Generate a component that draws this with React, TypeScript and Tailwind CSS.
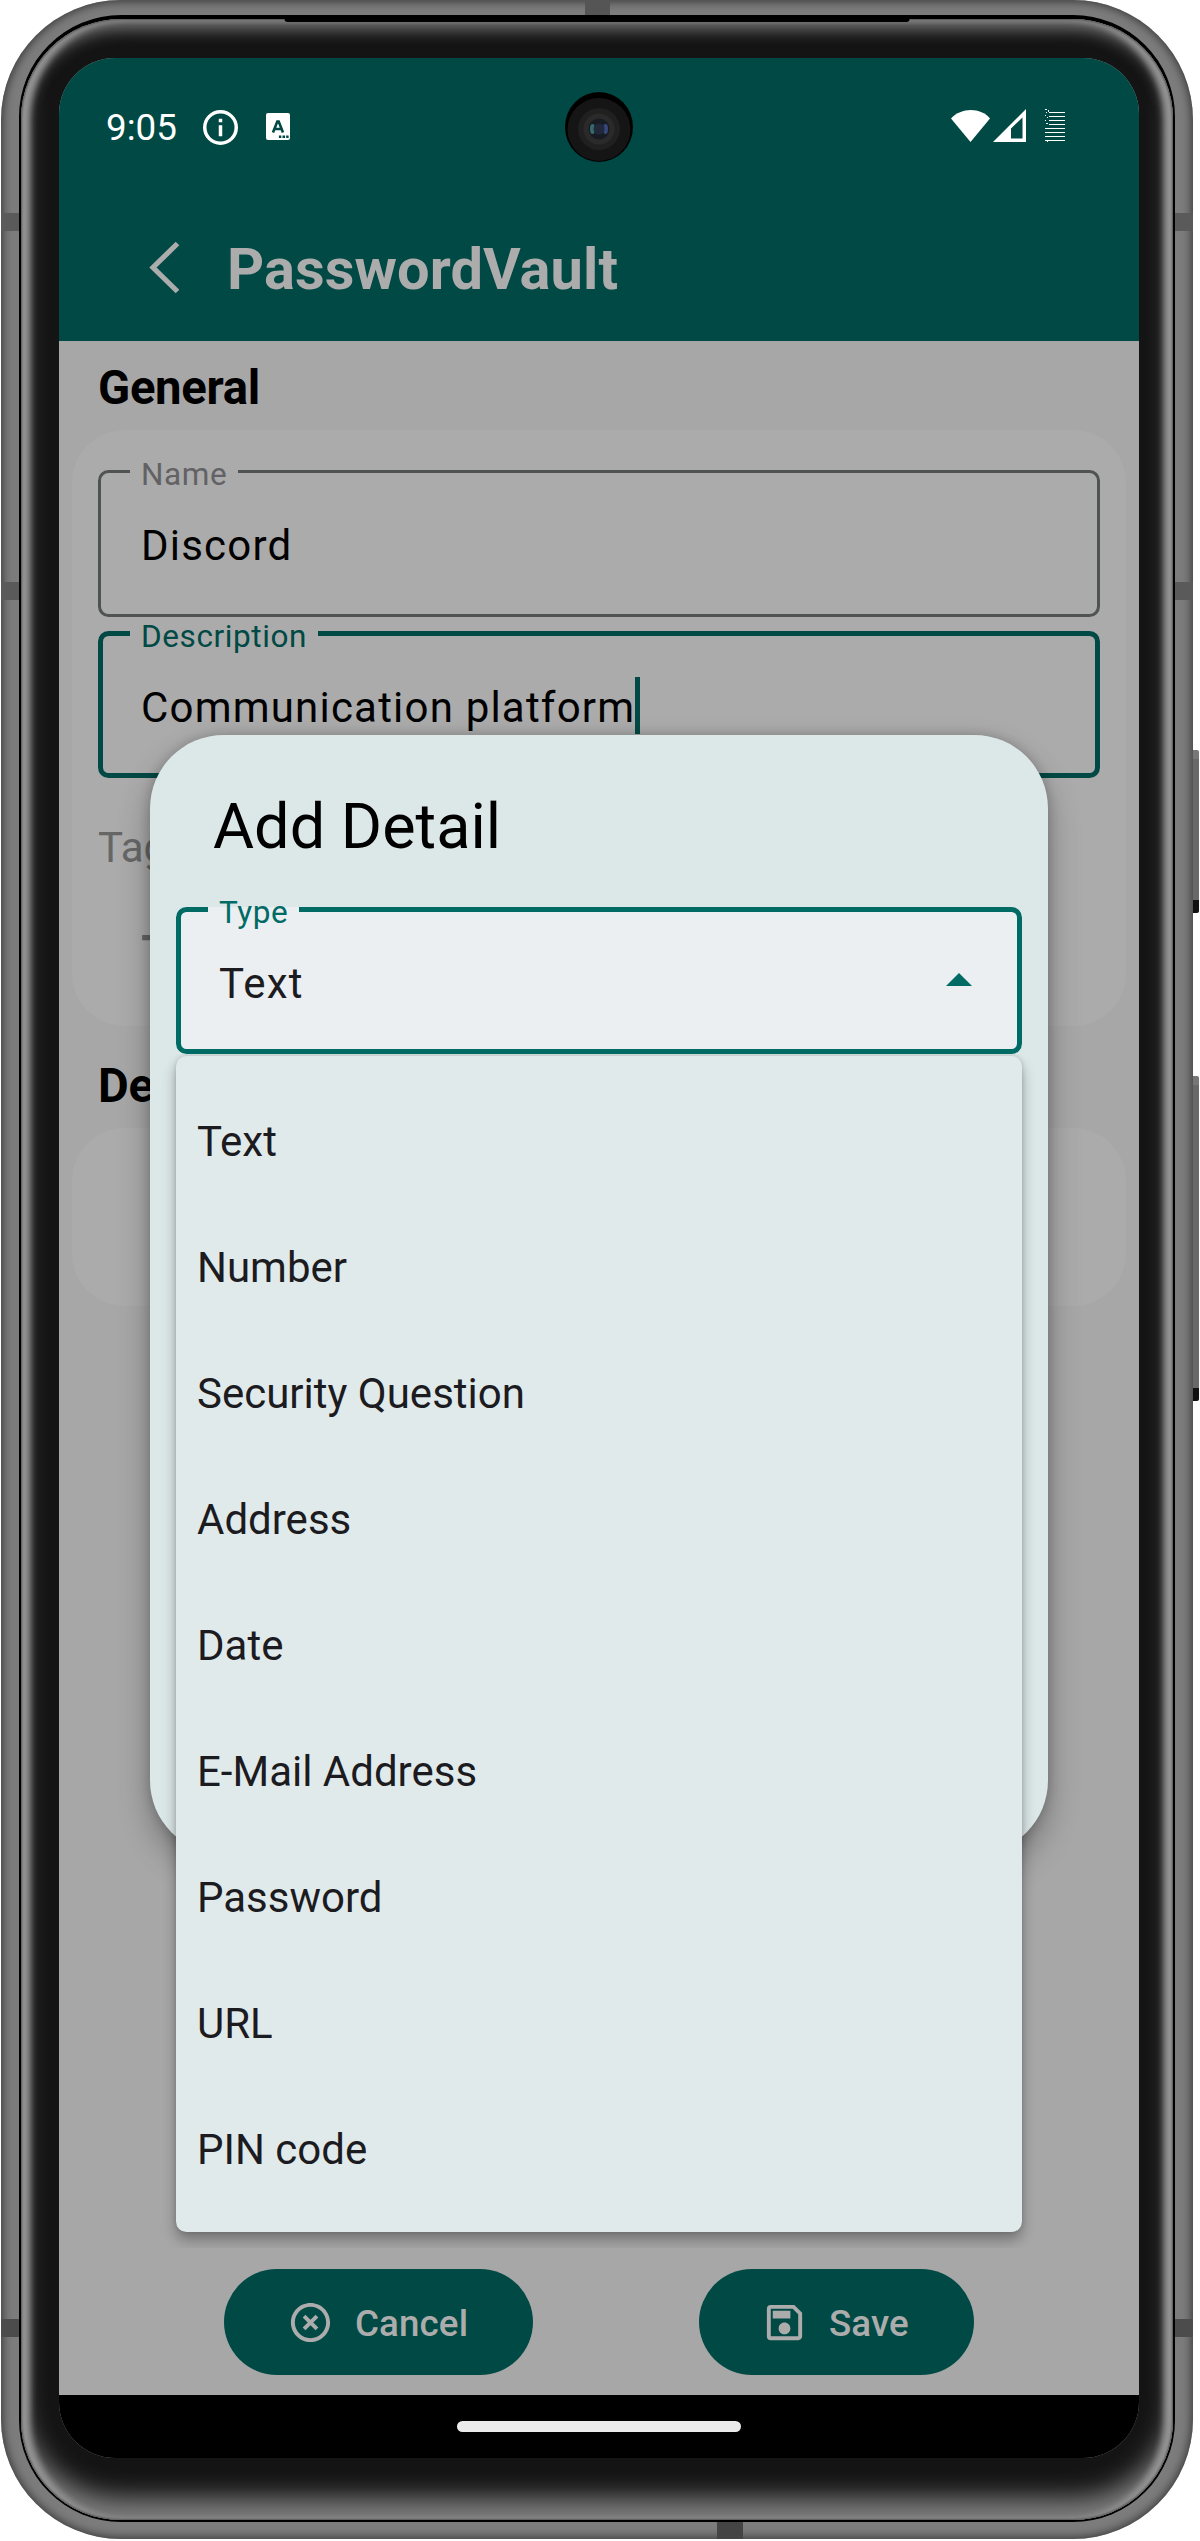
import React from "react";
import { MdHighlightOff, MdOutlineSave } from "react-icons/md";

const options = [
  "Text",
  "Number",
  "Security Question",
  "Address",
  "Date",
  "E-Mail Address",
  "Password",
  "URL",
  "PIN code",
];

function Camera() {
  return (
    <svg viewBox="0 0 68 70" className="absolute left-1/2 top-[34px] h-[70px] w-[68px] -translate-x-1/2">
      <ellipse cx="34" cy="35" rx="34" ry="35" fill="#000" />
      <ellipse cx="34" cy="37.500" rx="31.500" ry="31.500" fill="#151515" />
      <circle cx="34" cy="37" r="21" fill="#202020" />
      <circle cx="34" cy="37" r="15.500" fill="#2a2a2a" />
      <circle cx="34" cy="37" r="10.500" fill="#181c22" />
      <ellipse cx="27.500" cy="37" rx="2.500" ry="5" fill="#376a6a" />
      <ellipse cx="40.500" cy="37" rx="2.500" ry="5" fill="#35467c" />
      <circle cx="34" cy="37" r="5.500" fill="#20283a" />
    </svg>
  );
}

function StatusBar() {
  return (
    <div className="relative flex h-[136px] items-center pl-[47px] pr-[74px] text-white">
      <span className="mr-[26px] pt-[4px] text-[36.75px] leading-[44px]">9:05</span>
      <svg className="mt-[3px] h-[35px] w-[35px]" viewBox="0 0 20 20" fill="none">
        <circle cx="10" cy="10" r="9" stroke="white" strokeWidth="2" />
        <path d="M9 8.700h2V15H9zM9 5h2v2H9z" fill="white" />
      </svg>
      <svg className="ml-[28px] h-[27px] w-[24px]" viewBox="0 0 24 27">
        <rect width="24" height="27" rx="2" fill="white" />
        <path
          d="M7 19.500L11.300 8.500h1.400L17 19.500M8.600 16h6.800"
          fill="none"
          stroke="#004944"
          strokeWidth="2.600"
        />
        <path fill="#004944" d="M12 22.500h10.600v2.500H12z" />
        <path fill="white" d="M11.500 22h1.400v3.500h-1.400zM15.300 22h1.200v3.500h-1.200zM19 22h1.200v3.500H19z" />
      </svg>
      <Camera />
      <svg className="ml-auto h-[34px] w-[114px]" viewBox="0 0 114 34">
        <path d="M0 9.500C10-2 30-2 39 9.500L19.500 33z" fill="white" />
        <path fillRule="evenodd" d="M75 0v33H42zM71.500 8.500L60 19.500v10h11.500z" fill="white" />
        {[3, 7, 11, 15].map((y) => (
          <rect key={y} x="98" y={y} width="16" height="1" fill="white" />
        ))}
        {[19, 23, 27, 31].map((y) => (
          <rect key={y} x="94" y={y} width="20" height="1" fill="white" />
        ))}
        <path
          d="M94 0h2v1h-2zM95 3h1v1h-1zM97 1h1v2h-1zM94 6h1v1h-1zM96 8h1v1h-1zM94 11h1v1h-1zM95 14h2v1h-2zM96 32h1v1h-1z"
          fill="white"
        />
      </svg>
    </div>
  );
}

function AppBar() {
  return (
    <div className="flex h-[147px] items-center gap-[47px] pl-[90px]">
      <svg className="h-[53px] w-[31px]" viewBox="0 0 31 53" fill="none">
        <path d="M28.500 2.500L4 26.500l24.500 24" stroke="#acacac" strokeWidth="5.200" />
      </svg>
      <h1 className="pt-[3px] text-[57.75px] font-bold leading-[68px] tracking-[0.1px] text-[#acacac]">
        PasswordVault
      </h1>
    </div>
  );
}

type FieldProps = {
  label: string;
  value: string;
  className: string;
  labelClass: string;
  trailing?: React.ReactNode;
};

function OutlinedField({ label, value, className, labelClass, trailing }: FieldProps) {
  return (
    <fieldset className={"rounded-[10.5px] " + className}>
      <legend className={"px-[11px] text-[31.5px] leading-[25px] tracking-[0.6px] " + labelClass}>
        <span className="inline-block translate-y-[3px]">{label}</span>
      </legend>
      <div className="flex h-[128px] items-center pb-[6px] pl-[11px]">
        {value}
        {trailing}
      </div>
    </fieldset>
  );
}

export default function App() {
  return (
    <div className="relative h-[2541px] w-[1200px] overflow-hidden bg-white pl-[1px] font-[Roboto,sans-serif]">
      <div className="absolute left-[1190px] top-[750px] h-[163px] w-[9px] rounded-[2px] border-b-[13px] border-t-[9px] border-b-[#111] border-t-[#777] bg-[#686868]" />
      <div className="absolute left-[1190px] top-[1076px] h-[325px] w-[9px] rounded-[2px] border-b-[13px] border-t-[9px] border-b-[#111] border-t-[#777] bg-[#686868]" />
      <div className="relative h-[2539px] w-[1192px] rounded-[120px] bg-[#7c7c7c] px-[18px] pt-[15px] shadow-[inset_0_0_8px_2px_#3c3c3c]">
        <div className="absolute left-[584px] top-0 h-[18px] w-[25px] bg-[#555]" />
        <div className="absolute bottom-0 left-[716px] h-[18px] w-[26px] bg-[#444]" />
        <div className="absolute left-0 top-[213px] h-[18px] w-[19px] bg-[#5a5a5a]" />
        <div className="absolute left-0 top-[582px] h-[18px] w-[19px] bg-[#5a5a5a]" />
        <div className="absolute left-0 top-[2319px] h-[18px] w-[19px] bg-[#4c4c4c]" />
        <div className="absolute right-0 top-[213px] h-[18px] w-[19px] bg-[#5a5a5a]" />
        <div className="absolute right-0 top-[582px] h-[18px] w-[19px] bg-[#5a5a5a]" />
        <div className="absolute right-0 top-[2319px] h-[18px] w-[19px] bg-[#4c4c4c]" />
        <div className="relative h-[2507px] rounded-[102px] bg-black px-[2px] pb-[2px] pt-[4px]">
          <div className="relative h-[2501px] rounded-[100px] bg-[#141414] px-[38px] pt-[39px] shadow-[inset_0_0_2px_1px_#555,inset_9px_0_6px_0_#949494,inset_-9px_0_6px_0_#949494,inset_0_10px_16px_0_#777,inset_0_-22px_26px_0_#808080]">
            <div className="absolute left-1/2 top-0 h-[3px] w-[625px] -translate-x-1/2 rounded-b-[3px] bg-black" />
            <div className="relative flex h-[2400px] w-[1080px] flex-col overflow-hidden rounded-[56px] bg-[#a7a7a7]">
              <header className="bg-[#004944]">
                <StatusBar />
                <AppBar />
              </header>
              <main className="flex flex-1 flex-col px-[13px] pt-[19px]">
                <h2 className="pl-[26px] text-[47.25px] font-bold leading-[56px] tracking-[-0.3px]">General</h2>
                <section className="mt-[14px] flex h-[596px] flex-col rounded-[52.5px] bg-[#ababab] px-[26px] pt-[29px] text-[42px] tracking-[1.2px]">
                  <OutlinedField
                    label="Name"
                    value="Discord"
                    className="h-[158px] border-3 border-[#4f5452] pl-[29px]"
                    labelClass="text-[#626264]"
                  />
                  <OutlinedField
                    label="Description"
                    value="Communication platform"
                    className="mt-[4px] h-[157px] border-5 border-[#004944] pl-[27px]"
                    labelClass="text-[#004944]"
                    trailing={<span className="mb-[3px] h-[57px] w-[5px] bg-[#004944]" />}
                  />
                  <div className="mt-[45px] leading-[50px] tracking-normal text-[#666]">Tags</div>
                  <svg className="ml-[31px] mt-[33px] h-[63px] w-[63px]" viewBox="0 0 24 24" fill="#666">
                    <path d="M19 13h-6v6h-2v-6H5v-2h6V5h2v6h6z" />
                  </svg>
                </section>
                <h2 className="mt-[32px] pl-[26px] text-[47.25px] font-bold leading-[56px] tracking-[-0.3px]">Details</h2>
                <section className="mt-[14px] h-[178px] rounded-[52.5px] bg-[#ababab]" />
              </main>
              <div className="flex gap-[166px] pb-[20px] pl-[165px] text-[36.75px] font-medium text-[#acacac]">
                <button className="flex h-[106px] w-[309px] items-center gap-[21px] rounded-full bg-[#004944] pl-[63px]">
                  <MdHighlightOff className="h-[47px] w-[47px]" />
                  <span className="pt-[3px] tracking-[0.1px]">Cancel</span>
                </button>
                <button className="flex h-[106px] w-[275px] items-center gap-[21px] rounded-full bg-[#004944] pl-[62px]">
                  <MdOutlineSave className="h-[47px] w-[47px]" />
                  <span className="pt-[3px] tracking-[0.1px]">Save</span>
                </button>
              </div>
              <footer className="flex h-[63px] justify-center bg-black pt-[26px]">
                <div className="h-[11px] w-[284px] rounded-full bg-[#ebebeb]" />
              </footer>

              <div className="absolute left-[91px] top-[677px] flex h-[1119px] w-[898px] flex-col rounded-[73.5px] bg-[#dce7e8] px-[26px] pt-[54px] shadow-[0_16px_32px_rgba(0,0,0,0.3),0_0_12px_rgba(0,0,0,0.2)]">
                <h3 className="pl-[37px] text-[63px] leading-[76px]">Add Detail</h3>
                <div className="flex flex-col pt-[32px] text-[42px] tracking-[1.2px] text-[#1c1b1f]">
                  <OutlinedField
                    label="Type"
                    value="Text"
                    className="h-[157px] border-5 border-[#006a64] bg-[#ebeff2] pl-[27px]"
                    labelClass="text-[#006a64]"
                    trailing={
                      <svg className="mb-[7px] ml-auto mr-[45px] h-[13px] w-[26px]" viewBox="0 0 26 13">
                        <path d="M0 13L13 0l13 13z" fill="#006a64" />
                      </svg>
                    }
                  />
                </div>
              </div>

              <div className="absolute left-[117px] top-[998px] h-[1192px] w-[846px] [clip-path:inset(-2px_-26px_0_-26px)]">
                <ul className="h-[1176px] rounded-[10.5px] bg-[#e1eaeb] pt-[22px] text-[42px] text-[#1c1b1f] shadow-[0_8px_14px_rgba(0,0,0,0.3),0_0_5px_rgba(0,0,0,0.15)]">
                  {options.map((o) => (
                    <li key={o} className="flex h-[126px] items-center pl-[21px]">
                      {o}
                    </li>
                  ))}
                </ul>
              </div>
            </div>
          </div>
        </div>
      </div>
    </div>
  );
}
